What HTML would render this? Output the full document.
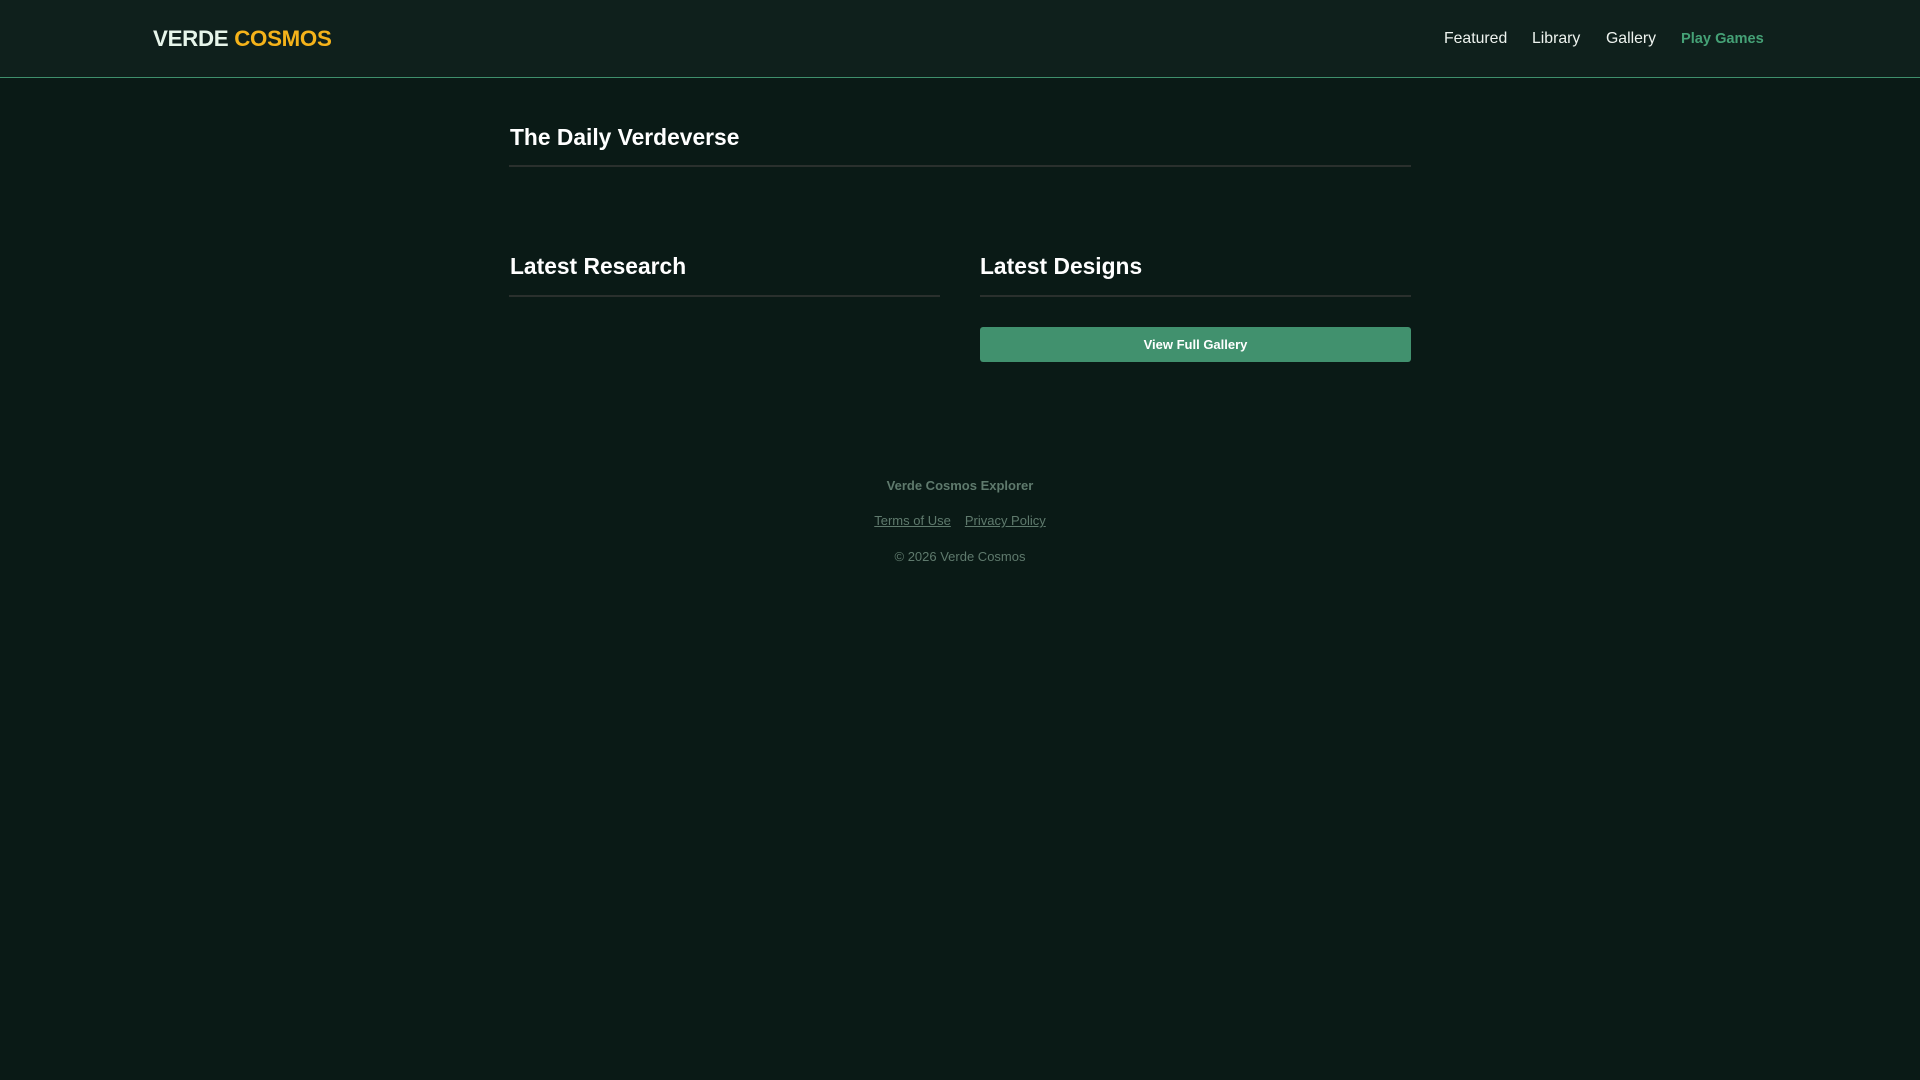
<!DOCTYPE html>
<html><head><meta charset="utf-8"><style>
*{margin:0;padding:0;box-sizing:border-box}
body{width:1920px;height:1080px;background:#0a1a16;font-family:"Liberation Sans",Arial,sans-serif;color:#fff;position:relative;overflow:hidden}
header{position:absolute;left:0;top:0;width:1920px;height:78px;background:#0f201c;border-bottom:1px solid #3f8f6c}
.logo{position:absolute;left:153px;top:26px;font-size:22.3px;font-weight:bold;color:#e6f5ea;letter-spacing:-0.3px}
.logo span{color:#f5b31a}
nav{position:absolute;top:30px;font-size:15.8px;color:#f0f4f1}
nav a{position:absolute;white-space:nowrap;color:#eef3ef;text-decoration:none}
h2{position:absolute;font-size:22.8px;font-weight:bold;color:#fff}
.rule{position:absolute;height:2px;background:#2a302d}
.btn{position:absolute;left:980px;top:327px;width:431px;height:35px;background:#41916e;border-radius:3px;color:#fff;font-size:13px;font-weight:bold;text-align:center;line-height:35px}
.f{position:absolute;left:0;width:1920px;text-align:center;font-size:13px;color:#5f7a6d}
.f a{color:#5f7a6d;text-decoration:underline;margin:0 7px}
</style></head><body>
<header>
<div class="logo">VERDE <span>COSMOS</span></div>
<nav>
<a style="left:1444px">Featured</a>
<a style="left:1532px">Library</a>
<a style="left:1606px">Gallery</a>
<a style="left:1681px;color:#45a176;font-weight:bold;font-size:14.6px;top:1px">Play Games</a>
</nav>
</header>
<h2 style="left:510px;top:124px">The Daily Verdeverse</h2>
<div class="rule" style="left:509px;top:165px;width:902px"></div>
<h2 style="left:510px;top:253px">Latest Research</h2>
<div class="rule" style="left:509px;top:295px;width:431px"></div>
<h2 style="left:980px;top:253px">Latest Designs</h2>
<div class="rule" style="left:980px;top:295px;width:431px"></div>
<div class="btn">View Full Gallery</div>
<div class="f" style="top:478px;font-weight:bold">Verde Cosmos Explorer</div>
<div class="f" style="top:513px"><a>Terms of Use</a><a>Privacy Policy</a></div>
<div class="f" style="top:549px">© 2026 Verde Cosmos</div>
</body></html>
